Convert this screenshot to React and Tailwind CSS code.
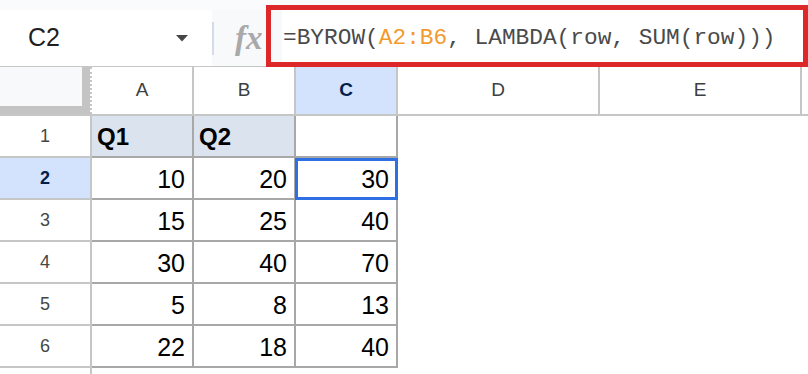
const rows = [
  ["Q1", "Q2", ""],
  [10, 20, 30],
  [15, 25, 40],
  [30, 40, 70],
  [5, 8, 13],
  [22, 18, 40],
];

function FormulaBar() {
  return (
    <div className="flex h-[67px] bg-[#f9fbfd]">
      {/* Name box */}
      <div className="mt-[10px] flex h-[57px] w-[212px] items-center justify-between border-b border-[#c4c7c5] bg-white pl-[28px] pr-[24px]">
        <span className="text-[25px] text-[#1f1f1f]">C2</span>
        <svg width="12" height="7" viewBox="0 0 12 7">
          <path d="M0 0h12L6 6.5z" fill="#444746" />
        </svg>
      </div>

      {/* fx */}
      <div className="mt-[10px] flex h-[57px] w-[54px] items-center border-b border-[#c4c7c5] bg-[#f8f9fa]">
        <div className="h-[33px] w-[2px] bg-[#d3dce8]" />
        <span className="ml-[21px] font-['Liberation_Serif',serif] text-[33px] font-bold italic leading-none text-[#a9a9a9]">
          fx
        </span>
      </div>

      {/* Formula input, outlined in red */}
      <div className="mt-[5px] flex h-[62px] flex-1 border-[5px] border-[#dc2828]">
        <div className="w-[11px] bg-[#f8f9fa]" />
        <div className="flex flex-1 items-center bg-white pl-[1px] pt-[4px] font-['Liberation_Mono',monospace] text-[22.8px] text-[#4a4a4a]">
          <span>=BYROW(</span>
          <span className="text-[#f29a2e]">A2:B6</span>
          <span>, LAMBDA(row, SUM(row)))</span>
        </div>
      </div>
    </div>
  );
}

function ColHeader({ label, w, active }) {
  return (
    <div
      className={
        "flex h-full items-center justify-center border-r-2 border-[#c4c7c5] text-[19px] " +
        w +
        (active ? " bg-[#d3e3fd] font-bold text-[#041e49]" : " bg-white text-[#3c4043]")
      }
    >
      {label}
    </div>
  );
}

function Grid() {
  return (
    <div>
      {/* Column headers */}
      <div className="flex h-[49px] border-b-2 border-[#c4c7c5]">
        <div className="h-full w-[92px] border-r-2 border-dotted border-[#c4c7c5] bg-[#c4c4c4] bg-clip-padding">
          <div className="h-[39px] w-[82px] bg-[#f8f9fa]" />
        </div>
        <ColHeader label="A" w="w-[102px]" />
        <ColHeader label="B" w="w-[102px]" />
        <ColHeader label="C" w="w-[102px]" active />
        <ColHeader label="D" w="w-[202px]" />
        <ColHeader label="E" w="w-[202px]" />
      </div>

      {rows.map((r, i) => {
        const sel = i === 1;
        return (
          <div key={i} className="flex h-[42px]">
            <div
              className={
                "flex w-[92px] items-center justify-center border-r-2 border-b-2 border-[#c4c7c5] text-[18px] " +
                (sel ? "bg-[#d3e3fd] font-bold text-[#041e49]" : "bg-white text-[#444746]")
              }
            >
              {i + 1}
            </div>
            {r.map((v, j) => {
              const head = i === 0;
              const filled = head && j < 2;
              return (
                <div
                  key={j}
                  className={
                    "relative flex w-[102px] items-center border-r-2 border-b-2 border-[#a8a8a8] " +
                    (head
                      ? "justify-start pl-[5px] pt-[2px] text-[24px] font-bold text-black "
                      : "justify-end pr-[7px] pt-[3px] text-[25px] text-black ") +
                    (filled ? "bg-[#dbe3ee]" : "bg-white")
                  }
                >
                  {v}
                  {sel && j === 2 && (
                    <div className="absolute -left-[1px] top-0 -right-[2px] -bottom-[2px] border-[3px] border-[#2f6fe4]" />
                  )}
                </div>
              );
            })}
          </div>
        );
      })}

      <div className="flex h-[10px]">
        <div className="w-[92px] border-r-2 border-[#c4c7c5]" />
      </div>
    </div>
  );
}

export default function App() {
  return (
    <div className="h-[374px] w-[808px] overflow-hidden bg-white font-['Liberation_Sans',Arial,sans-serif]">
      <FormulaBar />
      <Grid />
    </div>
  );
}
